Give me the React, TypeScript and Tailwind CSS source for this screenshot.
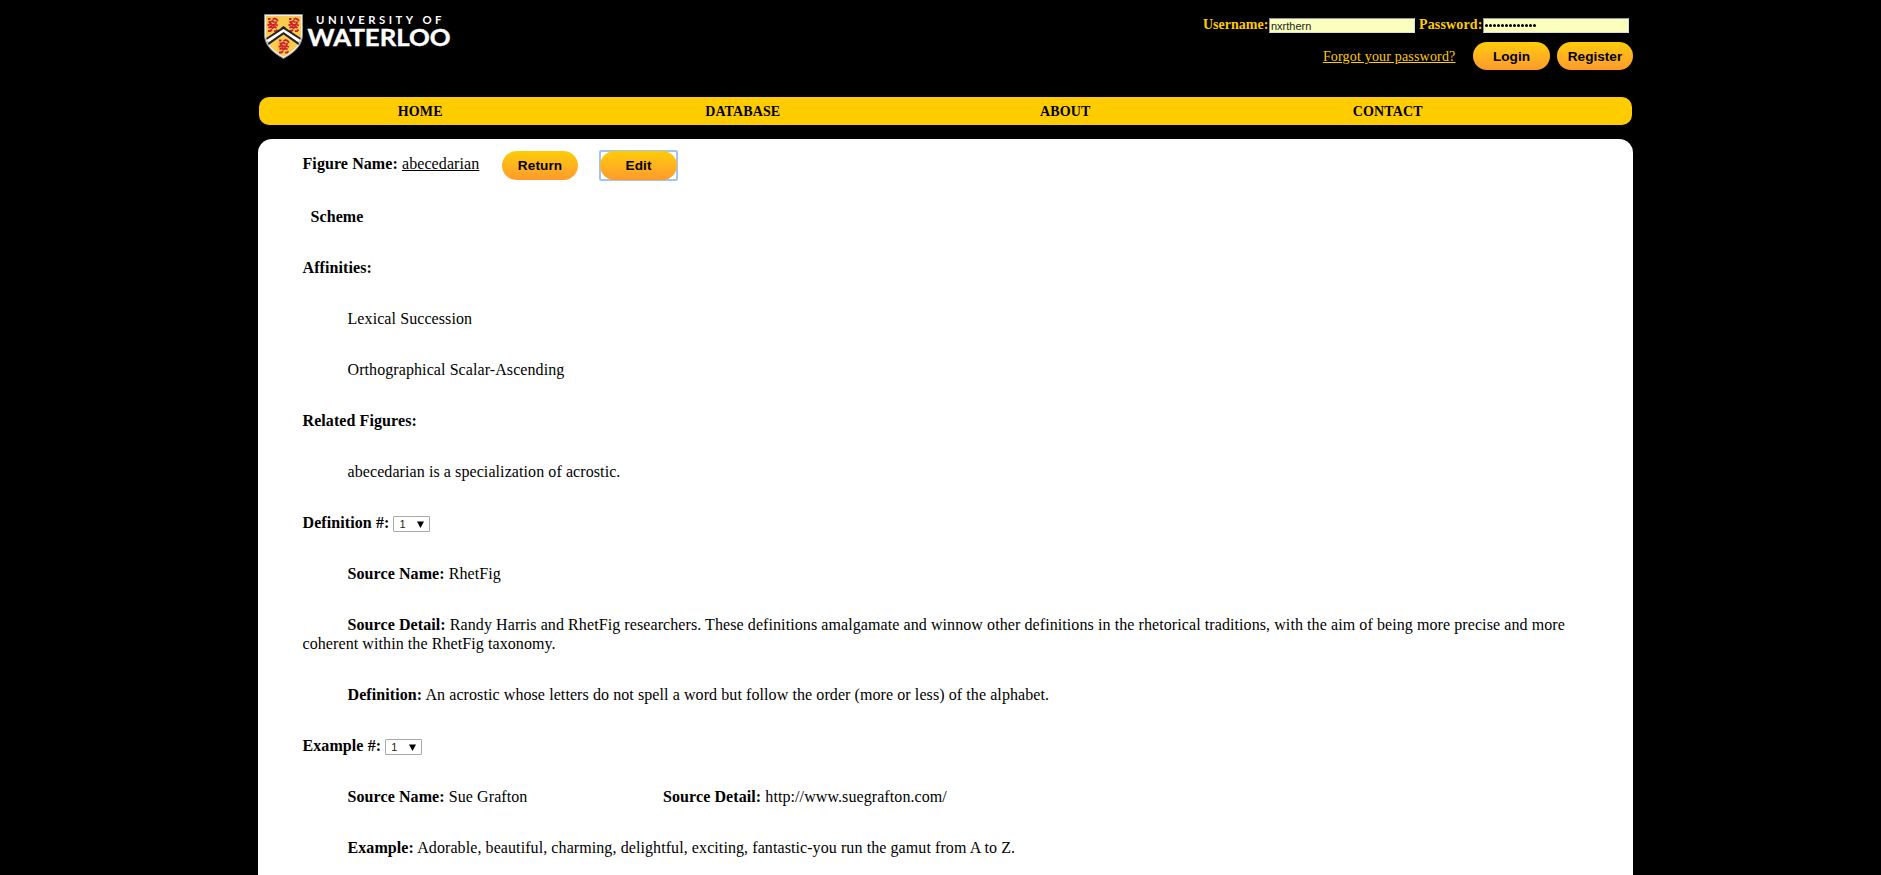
import type { ReactNode } from "react";

const pill =
  "rounded-[15px] bg-linear-to-b from-[#ffcc00] to-[#ff9a2a] text-center font-['Liberation_Sans',Arial,sans-serif] text-[13.6px] font-bold text-black";

function Lion({ x, y }: { x: number; y: number }) {
  return (
    <g transform={`translate(${x} ${y})`} stroke="#cf2030" strokeWidth="1.8" fill="none">
      <path d="M0.500 1h2.500M5 1.500l2-1 2 0.800 1.500 2M1 4h2l2-1 2 1.500M9 3.500l-1.500 3 3 1M0 7h1.500l1.500-1.500 2 1.500 2 0M1 10l2.500-1.500 1.500 1.500 2-1.500 2 1.500M0.500 13h2.500l1.500-1.500M6.500 13.200h2l1.500-1.500" />
    </g>
  );
}

function Logo() {
  return (
    <svg width="190" height="52" viewBox="262 12 190 52" className="block">
      <path d="M264.500 14.500h38v20c0 10-7 17.500-19 24-12-6.500-19-14-19-24z" fill="#eee" stroke="#8c8c8c" strokeWidth="1" />
      <path d="M266 16h35v18.500c0 9-6.500 15.800-17.500 22-11-6.200-17.500-13-17.500-22z" fill="#fbcb4d" />
      <Lion x={267.5} y={18} />
      <Lion x={288.5} y={18} />
      <Lion x={278.5} y={39.5} />
      <path d="M266.200 38L283.500 26.500 300.800 38l-2.400 7L283.500 34.500 268.600 45z" fill="#222" />
      <path d="M266.800 39.800L283.500 29 300.200 39.800l-1.200 3L283.500 32 268 42.800z" fill="#fff" />
      <path d="M281.500 28.400L283.500 27l2 1.400" fill="none" stroke="#222" strokeWidth="1.500" />
      <text x="316" y="24" textLength="125.500" fill="#fff" fontFamily="Lato, sans-serif" fontWeight="700" fontSize="11.300">
        UNIVERSITY OF
      </text>
      <text x="307.500" y="46" textLength="143" lengthAdjust="spacingAndGlyphs" fill="#fff" stroke="#fff" strokeWidth="0.400" fontFamily="Lato, sans-serif" fontWeight="700" fontSize="23.500">
        WATERLOO
      </text>
    </svg>
  );
}

function NumberSelect() {
  return (
    <span className="ml-1 mt-[3px] flex h-4 w-[37px] items-center justify-between rounded-[1px] border border-[#a9a9a9] bg-white pl-[5px] pr-[5px] font-['Liberation_Sans',Arial,sans-serif] text-[11px] leading-none text-[#222]">
      1
      <svg width="7" height="7" viewBox="0 0 7 7">
        <path d="M0 0.500h7L3.500 7z" fill="#000" />
      </svg>
    </span>
  );
}

function Row({ indent = false, children }: { indent?: boolean; children: ReactNode }) {
  return <p className={indent ? "mb-8 indent-[45px]" : "mb-8 flex h-[19px]"}>{children}</p>;
}

export default function App() {
  return (
    <div className="h-[875px] overflow-hidden bg-black pl-[258px] font-['Liberation_Serif','Times_New_Roman',serif] text-black">
      <header className="flex h-[97px] w-[1375px] justify-between">
        <div className="pl-1 pt-3">
          <Logo />
        </div>
        <div className="flex flex-col items-end text-sm text-[#ffcc00]">
          <div className="mr-1 mt-[18px] flex h-[15px] items-center font-bold">
            <label className="w-[66px] -translate-y-px whitespace-nowrap">Username:</label>
            <span className="mr-1 flex h-[15px] w-[146px] items-center border border-[#ddd] border-t-[#999] border-l-[#999] bg-[#faffbd] pl-px pt-px font-['Liberation_Sans',Arial,sans-serif] text-[11px] font-normal leading-none text-[#222]">
              nxrthern
            </span>
            <label className="w-[64px] -translate-y-px whitespace-nowrap tracking-[0.15px]">Password:</label>
            <span className="flex h-[15px] w-[146px] items-center gap-px border border-[#ddd] border-t-[#999] border-l-[#999] bg-[#faffbd] pl-px">
              {Array.from({ length: 13 }, (_, i) => (
                <i key={i} className="size-[3px] rounded-full bg-black" />
              ))}
            </span>
          </div>
          <div className="mt-[9px] flex items-center">
            <a className="mr-[17.500px] pt-[2px] tracking-[0.18px] underline">Forgot your password?</a>
            <button className={`${pill} mr-[7px] h-[28px] w-[77px] pt-px`}>Login</button>
            <button className={`${pill} h-[28px] w-[76px] pt-px`}>Register</button>
          </div>
        </div>
      </header>
      <nav className="ml-px flex h-7 w-[1373px] items-center rounded-[10px] bg-[#ffcc00] pt-px text-sm font-bold tracking-[0.12px]">
        <a className="w-[322.500px] text-center">HOME</a>
        <a className="w-[322.500px] text-center">DATABASE</a>
        <a className="w-[322.500px] text-center">ABOUT</a>
        <a className="w-[322.500px] text-center">CONTACT</a>
      </nav>
      <main className="mt-[14px] h-[736px] w-[1375px] rounded-t-[14px] bg-white pl-[44.500px] pr-[45px] pt-3 text-base leading-[19px] tracking-[0.085px]">
        <div className="mb-[27px] flex h-[29px]">
          <span className="mt-[3px] w-[199.500px] whitespace-nowrap">
            <b>Figure Name:</b> <u>abecedarian</u>
          </span>
          <button className={`${pill} h-[29px] w-[76px]`}>Return</button>
          <span className="-mt-px ml-[21px] flex h-[31px] w-[79px] items-center justify-center rounded-[2px] border-2 border-[#a3c3f7]">
            <button className={`${pill} h-[29px] w-[77px] shrink-0`}>Edit</button>
          </span>
        </div>
        <Row>
          <b className="pl-2">Scheme</b>
        </Row>
        <Row>
          <b>Affinities:</b>
        </Row>
        <Row indent>Lexical Succession</Row>
        <Row indent>Orthographical Scalar-Ascending</Row>
        <Row>
          <b>Related Figures:</b>
        </Row>
        <Row indent>abecedarian is a specialization of acrostic.</Row>
        <Row>
          <b>Definition #:</b>
          <NumberSelect />
        </Row>
        <Row indent>
          <b>Source Name:</b> RhetFig
        </Row>
        <Row indent>
          <b>Source Detail:</b> Randy Harris and RhetFig researchers. These definitions amalgamate and winnow other
          definitions in the rhetorical traditions, with the aim of being more precise and more coherent within the
          RhetFig taxonomy.
        </Row>
        <Row indent>
          <b>Definition:</b> An acrostic whose letters do not spell a word but follow the order (more or less) of the
          alphabet.
        </Row>
        <Row>
          <b>Example #:</b>
          <NumberSelect />
        </Row>
        <div className="mb-8 flex pl-[45px]">
          <span className="w-[315.500px]">
            <b>Source Name:</b> Sue Grafton
          </span>
          <span>
            <b>Source Detail:</b> http://www.suegrafton.com/
          </span>
        </div>
        <Row indent>
          <b>Example:</b> Adorable, beautiful, charming, delightful, exciting, fantastic-you run the gamut from A to Z.
        </Row>
      </main>
    </div>
  );
}
